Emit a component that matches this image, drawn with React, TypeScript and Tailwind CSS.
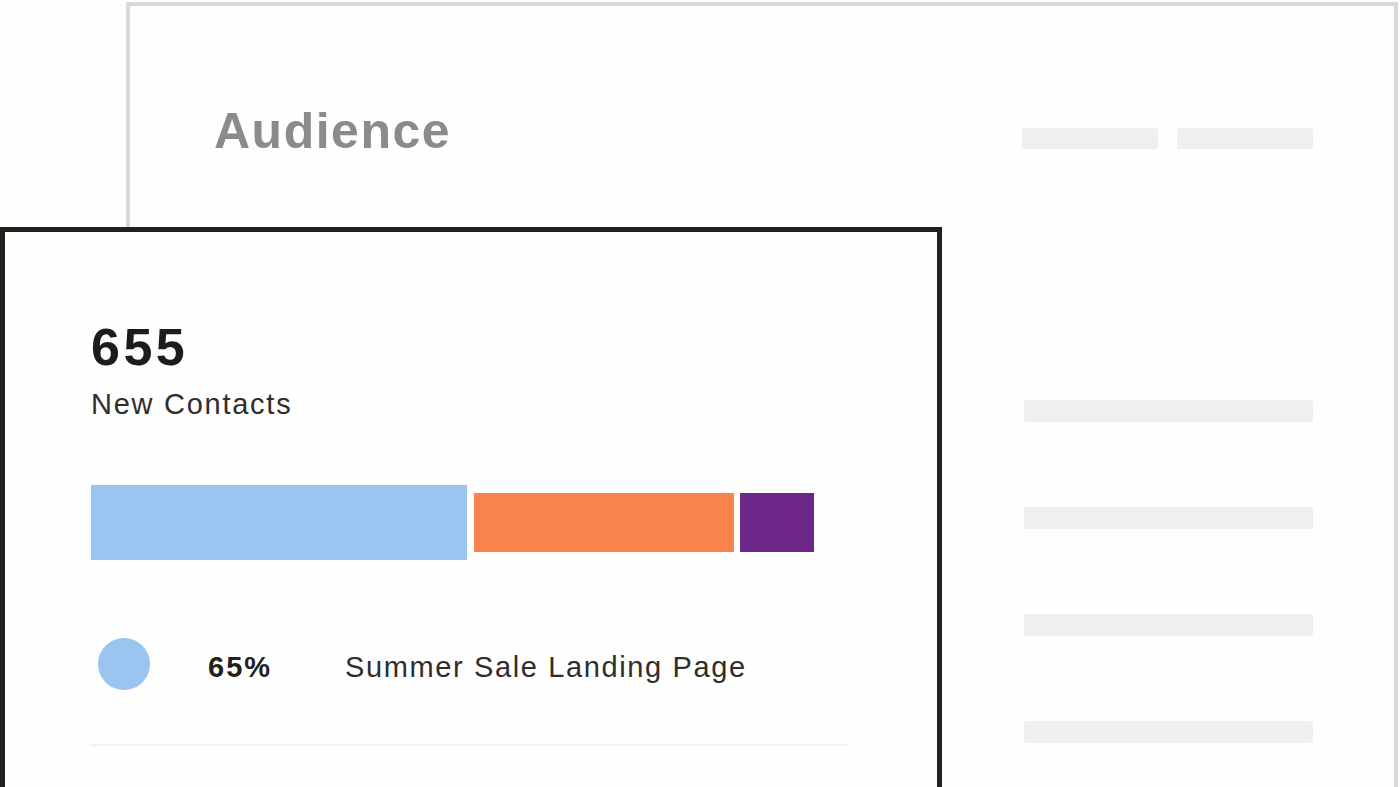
export default function App() {
  return (
    <div
      className="relative w-[1400px] h-[787px] overflow-hidden bg-[#fefefe]"
      style={{ fontFamily: '"Liberation Sans", Arial, sans-serif' }}
    >
      {/* Back card */}
      <div className="ml-[126px] mt-[2px] w-[1272px] h-[900px] border-[4px] border-[#d9d9d9] bg-[#fefefe] pl-[84px] pr-[81px] pt-[100px] flex flex-col">
        <div className="flex items-start justify-between">
          <div className="h-[50px] leading-[50px] text-[50px] font-bold tracking-[1.5px] text-[#8b8b8b]">
            Audience
          </div>
          <div className="mt-[22px] flex gap-[19px]">
            <div className="w-[136px] h-[21px] rounded-[2px] bg-[#efefed]" />
            <div className="w-[136px] h-[21px] rounded-[2px] bg-[#efefed]" />
          </div>
        </div>
        <div className="self-end mt-[244px] w-[289px] flex flex-col gap-[85px]">
          <div className="h-[22px] rounded-[2px] bg-[#efefed]" />
          <div className="h-[22px] rounded-[2px] bg-[#efefed]" />
          <div className="h-[22px] rounded-[2px] bg-[#efefed]" />
          <div className="h-[22px] rounded-[2px] bg-[#efefed]" />
        </div>
      </div>

      {/* Front card */}
      <div className="absolute left-0 top-[227px] w-[942px] h-[700px] border-[5px] border-[#231f1a] bg-[#fefefe] pl-[86px] pt-[89px] flex flex-col">
        <div className="h-[52px] leading-[52px] text-[52px] font-bold tracking-[3.5px] text-[#1f1b18]">
          655
        </div>
        <div className="mt-[17px] h-[29px] leading-[29px] text-[29px] tracking-[0.06em] text-[#302d2b]">
          New Contacts
        </div>
        <div className="mt-[66px] flex items-center">
          <div className="w-[376px] h-[75px] bg-[#9ac5f0]" />
          <div className="ml-[7px] w-[260px] h-[59px] bg-[#f8834b]" />
          <div className="ml-[6px] w-[74px] h-[59px] bg-[#6c2789]" />
        </div>
        <div className="mt-[78px] ml-[7px] flex items-center h-[52px]">
          <div className="w-[52px] h-[52px] rounded-full bg-[#9ac5f0]" />
          <div className="ml-[58px] mt-[6px] w-[137px] h-[29px] leading-[29px] text-[29px] font-bold tracking-[2px] text-[#231f1c]">
            65%
          </div>
          <div className="mt-[6px] h-[29px] leading-[29px] text-[29px] tracking-[0.056em] text-[#302d2b]">
            Summer Sale Landing Page
          </div>
        </div>
        <div className="mt-[54px] -ml-[1px] w-[758px] h-[2px] bg-[#f3f3f2]" />
      </div>
    </div>
  );
}
